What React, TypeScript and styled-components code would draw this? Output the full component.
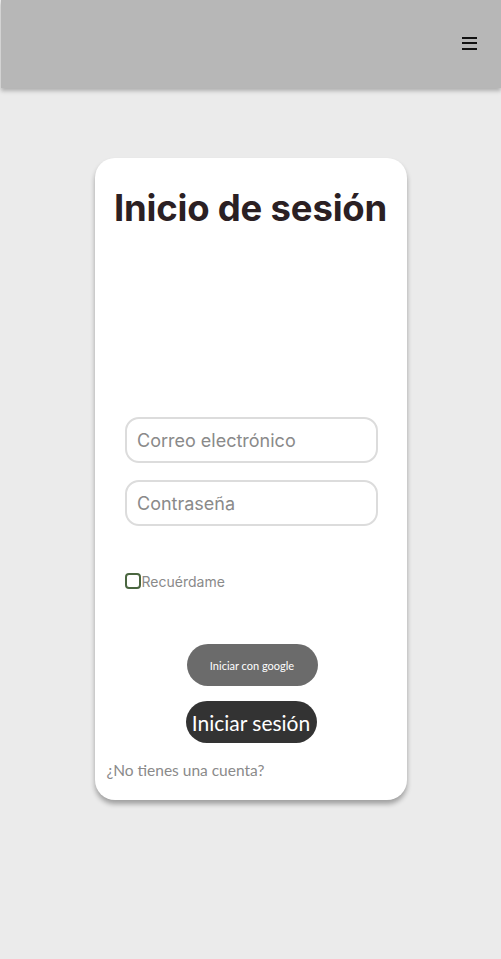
import React from "react";
import styled, { createGlobalStyle } from "styled-components";

const Global = createGlobalStyle`
  html, body { margin: 0; padding: 0; background: #ebebeb; }
  body { font-family: "Inter", "Liberation Sans", sans-serif; }
  * { box-sizing: border-box; }
`;

const Page = styled.div`
  min-height: 959px;
  background: #ebebeb;
  display: flex;
  flex-direction: column;
  align-items: center;
`;

const Header = styled.header`
  align-self: stretch;
  height: 88px;
  margin-left: 1px;
  background: #b7b7b7;
  box-shadow: 0 3px 4px rgba(0, 0, 0, 0.25);
  display: flex;
  align-items: center;
  justify-content: flex-end;
  padding-right: 24px;
`;

const MenuIcon = styled.button`
  width: 15px;
  height: 13px;
  padding: 0;
  border: none;
  background: none;
  display: flex;
  flex-direction: column;
  justify-content: space-between;
  margin-top: -2px;
  span {
    display: block;
    height: 2px;
    background: #111;
  }
`;

const Card = styled.main`
  margin-top: 70px;
  width: 312px;
  height: 642px;
  background: #fff;
  border-radius: 20px;
  box-shadow: 0 4px 5px rgba(0, 0, 0, 0.32);
  display: flex;
  flex-direction: column;
  align-items: center;
  padding: 25px 12px 0;
`;

const Title = styled.h1`
  margin: 0;
  font-family: "Inter", sans-serif;
  font-weight: 700;
  font-size: 36.5px;
  line-height: 50px;
  color: #2b2023;
  letter-spacing: -0.2px;
`;

const Form = styled.form`
  margin-top: 184px;
  margin-left: 2px;
  width: 253px;
  display: flex;
  flex-direction: column;
  gap: 17px;
`;

const Input = styled.input`
  width: 100%;
  height: 46px;
  border: 2px solid #dcdcdc;
  border-radius: 14px;
  padding: 0 10px;
  font-family: "Inter", sans-serif;
  font-size: 18px;
  color: #333;
  outline: none;
  &::placeholder { color: #8a8a8a; }
`;

const Remember = styled.label`
  margin-top: 47px;
  display: flex;
  align-items: center;
  font-family: "Inter", sans-serif;
  font-size: 14px;
  color: #8a8a8a;
  align-self: flex-start;
  margin-left: 18px;
`;

const Check = styled.span`
  width: 16px;
  height: 16px;
  border: 2px solid #4a6640;
  border-radius: 4px;
  margin-right: 1px;
  margin-top: -2px;
`;

const Buttons = styled.div`
  margin-top: 54px;
  margin-left: 3px;
  display: flex;
  flex-direction: column;
  align-items: center;
  gap: 15px;
`;

const Pill = styled.button<{ $dark?: boolean }>`
  width: 131px;
  height: 42px;
  border: none;
  border-radius: 21px;
  background: ${(p) => (p.$dark ? "#333333" : "#6b6b6b")};
  color: #fff;
  font-family: "Lato", "Noto Sans", sans-serif;
  font-size: ${(p) => (p.$dark ? "21px" : "11px")};
  padding: 0;
  white-space: nowrap;
  margin-left: ${(p) => (p.$dark ? "-2px" : "0")};
`;

const Footer = styled.a`
  margin-top: 18px;
  align-self: flex-start;
  font-family: "Lato", "Noto Sans", sans-serif;
  font-size: 15.5px;
  color: #8a8a8a;
  text-decoration: none;
`;

export default function App() {
  return (
    <>
      <Global />
      <Page>
        <Header>
          <MenuIcon aria-label="menu">
            <span />
            <span />
            <span />
          </MenuIcon>
        </Header>
        <Card>
          <Title>Inicio de sesión</Title>
          <Form onSubmit={(e) => e.preventDefault()}>
            <Input placeholder="Correo electrónico" />
            <Input type="password" placeholder="Contraseña" />
          </Form>
          <Remember>
            <Check />
            Recuérdame
          </Remember>
          <Buttons>
            <Pill>Iniciar con google</Pill>
            <Pill $dark>Iniciar sesión</Pill>
          </Buttons>
          <Footer>¿No tienes una cuenta?</Footer>
        </Card>
      </Page>
    </>
  );
}
